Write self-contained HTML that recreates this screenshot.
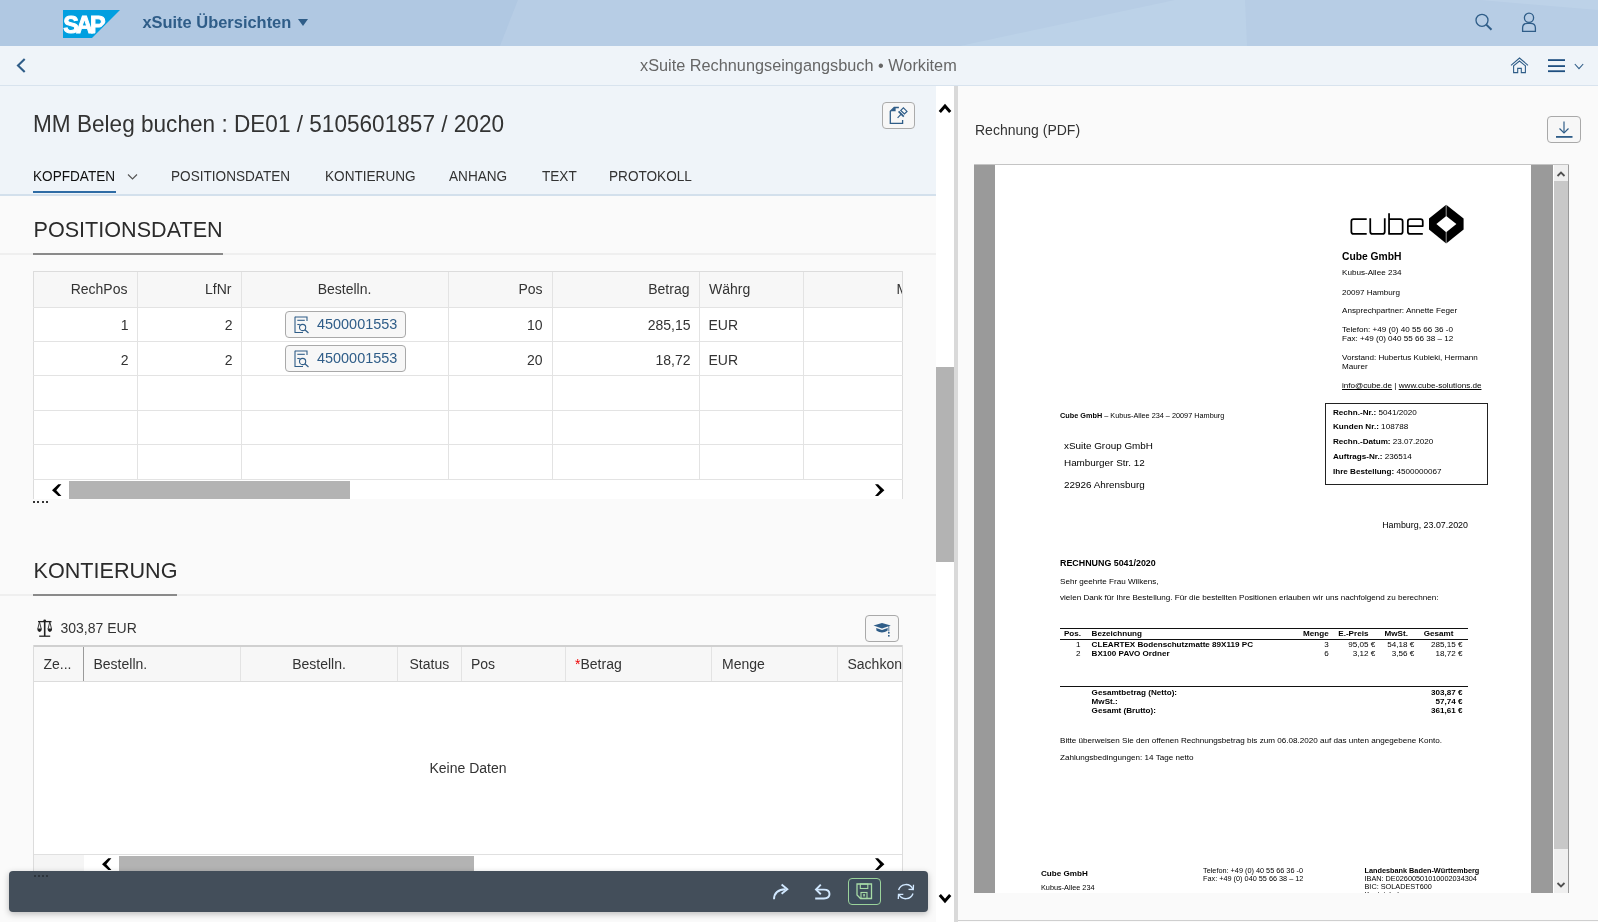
<!DOCTYPE html>
<html><head><meta charset="utf-8">
<style>
*{box-sizing:border-box;margin:0;padding:0}
html,body{width:1598px;height:922px;overflow:hidden;background:#fafafa;font-family:"Liberation Sans",sans-serif;color:#333}
body{will-change:transform}
.a{position:absolute}
.t{position:absolute;white-space:nowrap;line-height:1}
svg{overflow:visible}
</style></head><body>

<div class="a" style="left:0px;top:0px;width:1598px;height:46px;background:#b0c8e2"></div>
<svg class="a" style="left:0px;top:0px" width="1598" height="46" viewBox="0 0 1598 46"><polygon points="518,0 1598,0 1598,46 500,46" fill="#b7cde5"/><polygon points="960,46 1175,0 1245,0 1247,46" fill="#bcd2e8"/><polygon points="1480,0 1598,0 1598,10" fill="#bdd2e8"/></svg>
<svg class="a" style="left:63px;top:10px" width="57" height="28" viewBox="0 0 57 28"><polygon points="0,0 57,0 29,28 0,28" fill="#009fe0"/><clipPath id="sapc"><polygon points="0,0 57,0 29,28 0,28"/></clipPath><text clip-path="url(#sapc)" x="0.3" y="22.6" font-family="Liberation Sans" font-weight="bold" font-size="24.5" fill="#fff" stroke="#fff" stroke-width="1" letter-spacing="-3" transform="scale(0.955,1)">SAP</text></svg>
<div class="t" style="left:142.4px;top:13.68px;font-size:16.45px;font-weight:bold;color:#2f5d88;">xSuite Übersichten</div>
<svg class="a" style="left:297.5px;top:19px" width="10" height="7" viewBox="0 0 10 7"><polygon points="0,0 10,0 5,7" fill="#2f5d88"/></svg>
<svg class="a" style="left:1474px;top:12px" width="20" height="20" viewBox="0 0 20 20"><circle cx="8" cy="8.3" r="6" fill="none" stroke="#2f5d88" stroke-width="1.3"/><line x1="12.3" y1="12.6" x2="17.5" y2="17.8" stroke="#2f5d88" stroke-width="2"/></svg>
<svg class="a" style="left:1520px;top:12px" width="20" height="22" viewBox="0 0 20 22"><circle cx="9" cy="5.8" r="4.6" fill="none" stroke="#2f5d88" stroke-width="1.3"/><path d="M2.6,19.4 V16 Q2.6,11.4 7.5,11.4 H10.5 Q15.4,11.4 15.4,16 V19.4 Z" fill="none" stroke="#2f5d88" stroke-width="1.3"/></svg>
<div class="a" style="left:0px;top:46px;width:1598px;height:40px;background:#eff4f9;border-bottom:1px solid #d8e3ee"></div>
<div class="a" style="left:0px;top:86px;width:1598px;height:1px;background:#e4ecf4"></div>
<svg class="a" style="left:16px;top:58px" width="10" height="16" viewBox="0 0 10 16"><polyline points="8.7,1 2,7.5 8.7,14" fill="none" stroke="#2f5d88" stroke-width="2.1"/></svg>
<div class="t" style="left:640px;top:56.80px;font-size:16.3px;color:#666;">xSuite Rechnungseingangsbuch • Workitem</div>
<svg class="a" style="left:1510px;top:57px" width="20" height="17" viewBox="0 0 20 17"><polyline points="1,8.3 9.5,1 18,8.3" fill="none" stroke="#2f5d88" stroke-width="1.1"/><polyline points="3.2,9.2 9.5,4 15.8,9.2" fill="none" stroke="#2f5d88" stroke-width="1.1"/><path d="M3.6,9 V15.6 H7.7 V11.4 H11.3 V15.6 H15.4 V9" fill="none" stroke="#2f5d88" stroke-width="1.1"/></svg>
<svg class="a" style="left:1548px;top:58px" width="18" height="16" viewBox="0 0 18 16"><rect x="0" y="1.2" width="17" height="1.8" fill="#1f4f80"/><rect x="0" y="7.2" width="17" height="1.8" fill="#1f4f80"/><rect x="0" y="12.3" width="17" height="1.8" fill="#1f4f80"/></svg>
<svg class="a" style="left:1574px;top:63px" width="11" height="8" viewBox="0 0 11 8"><polyline points="0.8,1 5,5.6 9.2,1" fill="none" stroke="#2f5d88" stroke-width="1.1"/></svg>
<div class="a" style="left:0px;top:86px;width:936px;height:108px;background:#eff4f9"></div>
<div class="a" style="left:0px;top:194px;width:936px;height:2px;background:#d3e0ec"></div>
<div class="t" style="left:33px;top:114.17px;font-size:22.6px;color:#333;transform:scaleY(1.03);transform-origin:0 19.13px;">MM Beleg buchen : DE01 / 5105601857 / 2020</div>
<div class="a" style="left:882px;top:102px;width:33px;height:27px;background:#f7f7f7;border:1px solid #ababab;border-radius:4px"></div>
<svg class="a" style="left:888px;top:105px" width="22" height="22" viewBox="0 0 22 22"><path d="M10.9,2.5 H6.2 L2.3,6.2 V18.4 H14.6 V15" fill="none" stroke="#2f5d88" stroke-width="1.3"/><polygon points="2.3,6.3 7.6,2.1 7.6,6.3" fill="#2f5d88"/><line x1="9.6" y1="12.8" x2="13.2" y2="9.2" stroke="#2f5d88" stroke-width="1.2"/><line x1="10.6" y1="6.4" x2="15.8" y2="11.6" stroke="#2f5d88" stroke-width="1.7"/><polygon points="12.8,5.4 15.4,2.8 19,6.4 16.4,9" fill="none" stroke="#2f5d88" stroke-width="1.2"/></svg>
<div class="t" style="left:33px;top:169.79px;font-size:13.6px;color:#111;transform:scaleY(1.07);transform-origin:0 11.51px;">KOPFDATEN</div>
<div class="t" style="left:171px;top:169.79px;font-size:13.6px;color:#333;transform:scaleY(1.07);transform-origin:0 11.51px;">POSITIONSDATEN</div>
<div class="t" style="left:325px;top:169.79px;font-size:13.6px;color:#333;transform:scaleY(1.07);transform-origin:0 11.51px;">KONTIERUNG</div>
<div class="t" style="left:449px;top:169.79px;font-size:13.6px;color:#333;transform:scaleY(1.07);transform-origin:0 11.51px;">ANHANG</div>
<div class="t" style="left:542px;top:169.79px;font-size:13.6px;color:#333;transform:scaleY(1.07);transform-origin:0 11.51px;">TEXT</div>
<div class="t" style="left:609px;top:169.79px;font-size:13.6px;color:#333;transform:scaleY(1.07);transform-origin:0 11.51px;">PROTOKOLL</div>
<div class="a" style="left:33px;top:191px;width:83px;height:2px;background:#2f6ca5"></div>
<svg class="a" style="left:127px;top:173px" width="12" height="8" viewBox="0 0 12 8"><polyline points="1,1.5 5.5,6 10,1.5" fill="none" stroke="#555" stroke-width="1.15"/></svg>
<div class="a" style="left:0px;top:253px;width:936px;height:2px;background:#efefef"></div>
<div class="t" style="left:33.5px;top:218.52px;font-size:21.6px;color:#2b2b2b;transform:scaleY(1.03);transform-origin:0 18.28px;">POSITIONSDATEN</div>
<div class="a" style="left:33px;top:253px;width:190px;height:2px;background:#8a8a8a"></div>
<div class="a" style="left:33px;top:271px;width:870px;height:36px;background:#f7f7f7"></div>
<div class="a" style="left:33px;top:307px;width:870px;height:172px;background:#fff"></div>
<div class="a" style="left:33px;top:478px;width:870px;height:21px;background:#fff"></div>
<div class="a" style="left:137px;top:271px;width:1px;height:208px;background:#e3e3e3"></div>
<div class="a" style="left:241px;top:271px;width:1px;height:208px;background:#e3e3e3"></div>
<div class="a" style="left:448px;top:271px;width:1px;height:208px;background:#e3e3e3"></div>
<div class="a" style="left:552px;top:271px;width:1px;height:208px;background:#e3e3e3"></div>
<div class="a" style="left:699px;top:271px;width:1px;height:208px;background:#e3e3e3"></div>
<div class="a" style="left:803px;top:271px;width:1px;height:208px;background:#e3e3e3"></div>
<div class="a" style="left:33px;top:271px;width:1px;height:228px;background:#dcdcdc"></div>
<div class="a" style="left:33px;top:271px;width:870px;height:1px;background:#dcdcdc"></div>
<div class="a" style="left:902px;top:271px;width:1px;height:228px;background:#dcdcdc"></div>
<div class="a" style="left:33px;top:307px;width:870px;height:1px;background:#e3e3e3"></div>
<div class="a" style="left:33px;top:341px;width:870px;height:1px;background:#e3e3e3"></div>
<div class="a" style="left:33px;top:375px;width:870px;height:1px;background:#e3e3e3"></div>
<div class="a" style="left:33px;top:410px;width:870px;height:1px;background:#e3e3e3"></div>
<div class="a" style="left:33px;top:444px;width:870px;height:1px;background:#e3e3e3"></div>
<div class="a" style="left:33px;top:479px;width:870px;height:1px;background:#e3e3e3"></div>
<div class="t" style="left:-872.5px;width:1000px;text-align:right;top:282.35px;font-size:14px;color:#333;">RechPos</div>
<div class="t" style="left:-768.5px;width:1000px;text-align:right;top:282.35px;font-size:14px;color:#333;">LfNr</div>
<div class="t" style="left:-655.5px;width:2000px;text-align:center;top:282.35px;font-size:14px;color:#333;">Bestelln.</div>
<div class="t" style="left:-457.5px;width:1000px;text-align:right;top:282.35px;font-size:14px;color:#333;">Pos</div>
<div class="t" style="left:-310.5px;width:1000px;text-align:right;top:282.35px;font-size:14px;color:#333;">Betrag</div>
<div class="t" style="left:709px;top:282.35px;font-size:14px;color:#333;">Währg</div>
<div class="a" style="left:803px;top:271px;width:99px;height:36px;overflow:hidden"><div class="t" style="left:93.5px;top:11.35px;font-size:14px;color:#333">Menge</div></div>
<div class="t" style="left:-871.5px;width:1000px;text-align:right;top:317.85px;font-size:14px;color:#333;">1</div>
<div class="t" style="left:-767.5px;width:1000px;text-align:right;top:317.85px;font-size:14px;color:#333;">2</div>
<div class="t" style="left:-457.5px;width:1000px;text-align:right;top:317.85px;font-size:14px;color:#333;">10</div>
<div class="t" style="left:-309.5px;width:1000px;text-align:right;top:317.85px;font-size:14px;color:#333;">285,15</div>
<div class="t" style="left:708.5px;top:317.85px;font-size:14px;color:#333;">EUR</div>
<div class="a" style="left:285px;top:311px;width:121px;height:27px;background:#f7f7f7;border:1px solid #a9a9a9;border-radius:4px"></div>
<svg class="a" style="left:294px;top:316px" width="16" height="18" viewBox="0 0 16 18"><path d="M1,1 H13 V5 M13,1 V1" fill="none" stroke="#2f5d88" stroke-width="1.1"/><path d="M1,0.8 V16.5 H9" fill="none" stroke="#2f5d88" stroke-width="1.1"/><line x1="3.3" y1="4.3" x2="10.8" y2="4.3" stroke="#2f5d88" stroke-width="1.1"/><line x1="3.3" y1="8.5" x2="5.8" y2="8.5" stroke="#2f5d88" stroke-width="1.1"/><circle cx="8.6" cy="11.5" r="3.1" fill="none" stroke="#2f5d88" stroke-width="1.1"/><line x1="10.9" y1="13.8" x2="14.5" y2="17" stroke="#2f5d88" stroke-width="1.2"/></svg>
<div class="t" style="left:317px;top:316.77px;font-size:14.45px;color:#2f5d88;">4500001553</div>
<div class="t" style="left:-871.5px;width:1000px;text-align:right;top:352.55px;font-size:14px;color:#333;">2</div>
<div class="t" style="left:-767.5px;width:1000px;text-align:right;top:352.55px;font-size:14px;color:#333;">2</div>
<div class="t" style="left:-457.5px;width:1000px;text-align:right;top:352.55px;font-size:14px;color:#333;">20</div>
<div class="t" style="left:-309.5px;width:1000px;text-align:right;top:352.55px;font-size:14px;color:#333;">18,72</div>
<div class="t" style="left:708.5px;top:352.55px;font-size:14px;color:#333;">EUR</div>
<div class="a" style="left:285px;top:345px;width:121px;height:27px;background:#f7f7f7;border:1px solid #a9a9a9;border-radius:4px"></div>
<svg class="a" style="left:294px;top:350px" width="16" height="18" viewBox="0 0 16 18"><path d="M1,1 H13 V5 M13,1 V1" fill="none" stroke="#2f5d88" stroke-width="1.1"/><path d="M1,0.8 V16.5 H9" fill="none" stroke="#2f5d88" stroke-width="1.1"/><line x1="3.3" y1="4.3" x2="10.8" y2="4.3" stroke="#2f5d88" stroke-width="1.1"/><line x1="3.3" y1="8.5" x2="5.8" y2="8.5" stroke="#2f5d88" stroke-width="1.1"/><circle cx="8.6" cy="11.5" r="3.1" fill="none" stroke="#2f5d88" stroke-width="1.1"/><line x1="10.9" y1="13.8" x2="14.5" y2="17" stroke="#2f5d88" stroke-width="1.2"/></svg>
<div class="t" style="left:317px;top:351.47px;font-size:14.45px;color:#2f5d88;">4500001553</div>
<div class="a" style="left:69px;top:481px;width:281px;height:18px;background:#b3b3b3"></div>
<svg class="a" style="left:51.9px;top:484px" width="12" height="14" viewBox="0 0 12 14"><polygon points="6.3,0.2 9.4,0.2 4.3,6.2 9.4,12 6.3,12 0,6.2" fill="#000"/></svg>
<svg class="a" style="left:874.5px;top:484px" width="12" height="14" viewBox="0 0 12 14"><polygon points="3.1,0.2 0,0.2 5.1,6.2 0,12 3.1,12 9.4,6.2" fill="#000"/></svg>
<div class="a" style="left:33px;top:501px;width:2px;height:2px;background:#333"></div>
<div class="a" style="left:37px;top:501px;width:2px;height:2px;background:#333"></div>
<div class="a" style="left:42px;top:501px;width:2px;height:2px;background:#333"></div>
<div class="a" style="left:46px;top:501px;width:2px;height:2px;background:#333"></div>
<div class="a" style="left:0px;top:594px;width:936px;height:2px;background:#efefef"></div>
<div class="t" style="left:33.5px;top:559.62px;font-size:21.6px;color:#2b2b2b;transform:scaleY(1.03);transform-origin:0 18.28px;">KONTIERUNG</div>
<div class="a" style="left:33px;top:594px;width:144px;height:2px;background:#8a8a8a"></div>
<svg class="a" style="left:37px;top:619px" width="16" height="19" viewBox="0 0 16 19"><line x1="7.7" y1="1.5" x2="7.7" y2="17" stroke="#222" stroke-width="1.6"/><line x1="2.2" y1="17.2" x2="13.2" y2="17.2" stroke="#222" stroke-width="1.3"/><line x1="1" y1="2.6" x2="14.5" y2="2.6" stroke="#222" stroke-width="1.3"/><circle cx="7.7" cy="1.9" r="1.4" fill="#222"/><path d="M2.5,2.8 L0.8,9.8 M2.5,2.8 L4.2,9.8 M12.8,2.8 L11.1,9.8 M12.8,2.8 L14.5,9.8" stroke="#222" stroke-width="0.9" fill="none"/><path d="M0.3,9.6 H4.8 Q4.6,12.9 2.55,12.9 Q0.5,12.9 0.3,9.6 Z M10.6,9.6 H15.1 Q14.9,12.9 12.85,12.9 Q10.8,12.9 10.6,9.6 Z" fill="#222"/></svg>
<div class="t" style="left:60.5px;top:620.75px;font-size:14px;color:#333;">303,87 EUR</div>
<div class="a" style="left:865px;top:615px;width:34px;height:27px;background:#f7f7f7;border:1px solid #a9a9a9;border-radius:4px"></div>
<svg class="a" style="left:873px;top:623px" width="19" height="15" viewBox="0 0 19 15"><polygon points="0.5,2.6 9,0 17.8,2.6 9,5.4" fill="#2f5d88"/><path d="M3.2,5 L3.5,7.8 Q9,11 14.5,7.8 L14.8,5 L9,7 Z" fill="#2f5d88"/><line x1="15.8" y1="3" x2="15.8" y2="8.5" stroke="#2f5d88" stroke-width="0.8"/><rect x="15" y="9" width="1.6" height="1.6" fill="#2f5d88"/><rect x="15" y="12" width="1.6" height="1.6" fill="#2f5d88"/></svg>
<div class="a" style="left:33px;top:645px;width:870px;height:36px;background:#f7f7f7"></div>
<div class="a" style="left:33px;top:682px;width:870px;height:173px;background:#fff"></div>
<div class="a" style="left:33px;top:645px;width:870px;height:2px;background:#d0d0d0"></div>
<div class="a" style="left:33px;top:681px;width:870px;height:1px;background:#dcdcdc"></div>
<div class="a" style="left:33px;top:854px;width:870px;height:1px;background:#e0e0e0"></div>
<div class="a" style="left:33px;top:645px;width:1px;height:226px;background:#dcdcdc"></div>
<div class="a" style="left:902px;top:645px;width:1px;height:226px;background:#dcdcdc"></div>
<div class="a" style="left:83px;top:647px;width:1px;height:34px;background:#9a9a9a"></div>
<div class="a" style="left:240px;top:647px;width:1px;height:34px;background:#e3e3e3"></div>
<div class="a" style="left:397px;top:647px;width:1px;height:34px;background:#e3e3e3"></div>
<div class="a" style="left:461px;top:647px;width:1px;height:34px;background:#e3e3e3"></div>
<div class="a" style="left:565px;top:647px;width:1px;height:34px;background:#e3e3e3"></div>
<div class="a" style="left:711px;top:647px;width:1px;height:34px;background:#e3e3e3"></div>
<div class="a" style="left:837px;top:647px;width:1px;height:34px;background:#e3e3e3"></div>
<div class="t" style="left:43.5px;top:657.15px;font-size:14px;color:#333;">Ze...</div>
<div class="t" style="left:93.5px;top:657.15px;font-size:14px;color:#333;">Bestelln.</div>
<div class="t" style="left:-681px;width:2000px;text-align:center;top:657.15px;font-size:14px;color:#333;">Bestelln.</div>
<div class="t" style="left:409.5px;top:657.15px;font-size:14px;color:#333;">Status</div>
<div class="t" style="left:471px;top:657.15px;font-size:14px;color:#333;">Pos</div>
<div class="t" style="left:575px;top:657.15px;font-size:14px;color:#333;"><span style="color:#e00">*</span>Betrag</div>
<div class="t" style="left:722px;top:657.15px;font-size:14px;color:#333;">Menge</div>
<div class="a" style="left:837px;top:645px;width:65px;height:36px;overflow:hidden"><div class="t" style="left:10.5px;top:12.15px;font-size:14px;color:#333">Sachkonto</div></div>
<div class="t" style="left:-532px;width:2000px;text-align:center;top:760.95px;font-size:14px;color:#333;">Keine Daten</div>
<div class="a" style="left:34px;top:855px;width:50px;height:16px;background:#f5f5f5"></div>
<div class="a" style="left:84px;top:855px;width:818px;height:16px;background:#fff"></div>
<div class="a" style="left:119px;top:856px;width:355px;height:15px;background:#b3b3b3"></div>
<svg class="a" style="left:101.5px;top:858px" width="12" height="14" viewBox="0 0 12 14"><polygon points="6.3,0.2 9.4,0.2 4.3,6.2 9.4,12 6.3,12 0,6.2" fill="#000"/></svg>
<svg class="a" style="left:874.5px;top:858px" width="12" height="14" viewBox="0 0 12 14"><polygon points="3.1,0.2 0,0.2 5.1,6.2 0,12 3.1,12 9.4,6.2" fill="#000"/></svg>
<div class="a" style="left:8.5px;top:871px;width:919px;height:41px;background:#434e5a;border-radius:4px;box-shadow:0 2px 6px rgba(0,0,0,0.25)"></div>
<div class="a" style="left:33.5px;top:875px;width:2px;height:2px;background:#2c343c"></div>
<div class="a" style="left:37.8px;top:875px;width:2px;height:2px;background:#2c343c"></div>
<div class="a" style="left:42.1px;top:875px;width:2px;height:2px;background:#2c343c"></div>
<div class="a" style="left:46.4px;top:875px;width:2px;height:2px;background:#2c343c"></div>
<svg class="a" style="left:772px;top:883px" width="18" height="17" viewBox="0 0 18 17"><path d="M2,16.3 Q2.2,6.6 13.5,6.2" fill="none" stroke="#d1e8ff" stroke-width="1.9"/><polyline points="9.6,1.6 15.3,6.2 9.6,10.8" fill="none" stroke="#d1e8ff" stroke-width="1.9"/></svg>
<svg class="a" style="left:814px;top:883px" width="18" height="17" viewBox="0 0 18 17"><path d="M2.5,6.6 H10 Q15.5,6.6 15.5,11.1 Q15.5,15.5 10,15.5 H1.2" fill="none" stroke="#d1e8ff" stroke-width="1.9"/><polyline points="6.8,1.7 2,6.6 6.8,11.2" fill="none" stroke="#d1e8ff" stroke-width="1.9"/></svg>
<div class="a" style="left:848px;top:878px;width:33px;height:27px;background:#3d4d5c;border:1px solid #9bd39b;border-radius:4px"></div>
<svg class="a" style="left:856px;top:883px" width="17" height="17" viewBox="0 0 17 17"><path d="M1,1 H15.5 V15.5 H4.5 L1,12 Z" fill="none" stroke="#a6dba6" stroke-width="1.3"/><rect x="4.3" y="1" width="7.5" height="4.5" fill="none" stroke="#a6dba6" stroke-width="1.1"/><rect x="5" y="9.5" width="6" height="6" fill="none" stroke="#a6dba6" stroke-width="1.1"/><rect x="7.3" y="11" width="1.5" height="2.5" fill="#a6dba6"/></svg>
<svg class="a" style="left:896px;top:883px" width="20" height="18" viewBox="0 0 20 18"><path d="M2.6,7 A7.6,7.6 0 0 1 16.8,6" fill="none" stroke="#d1e8ff" stroke-width="1.4"/><path d="M17,10.5 A7.6,7.6 0 0 1 3,11.5" fill="none" stroke="#d1e8ff" stroke-width="1.4"/><polyline points="12.5,6.3 17.3,6.5 17.5,1.7" fill="none" stroke="#d1e8ff" stroke-width="1.3"/><polyline points="7.3,11.3 2.5,11.3 2.3,16" fill="none" stroke="#d1e8ff" stroke-width="1.3"/></svg>
<div class="a" style="left:936px;top:86px;width:18px;height:836px;background:#fff"></div>
<div class="a" style="left:936px;top:367px;width:18px;height:195px;background:#b3b3b3"></div>
<svg class="a" style="left:938px;top:102px" width="14" height="12" viewBox="0 0 14 12"><polyline points="1.8,10 7,4 12.2,10" fill="none" stroke="#000" stroke-width="3" stroke-linejoin="miter"/></svg>
<svg class="a" style="left:938px;top:893px" width="14" height="12" viewBox="0 0 14 12"><polyline points="1.8,2 7,8 12.2,2" fill="none" stroke="#000" stroke-width="3" stroke-linejoin="miter"/></svg>
<div class="a" style="left:954px;top:86px;width:4px;height:836px;background:#d9d9d9"></div>
<div class="a" style="left:958px;top:86px;width:640px;height:836px;background:#fafafa"></div>
<div class="a" style="left:958px;top:920px;width:640px;height:1px;background:#cfcfcf"></div>
<div class="t" style="left:975px;top:123.15px;font-size:14px;color:#333;">Rechnung (PDF)</div>
<div class="a" style="left:1547px;top:116px;width:34px;height:27px;background:#f7f7f7;border:1px solid #a9a9a9;border-radius:4px"></div>
<svg class="a" style="left:1555px;top:121px" width="18" height="17" viewBox="0 0 18 17"><line x1="9" y1="0.5" x2="9" y2="12" stroke="#2f5d88" stroke-width="1.2"/><polyline points="4.5,7.5 9,12 13.5,7.5" fill="none" stroke="#2f5d88" stroke-width="1.2"/><rect x="1" y="15" width="16.5" height="1.8" fill="#2f5d88"/></svg>
<div class="a" style="left:974px;top:164px;width:595px;height:729px;background:#9a9a9a"></div>
<div class="a" style="left:974px;top:164px;width:595px;height:1px;background:#c4c4c4"></div>
<div class="a" style="left:995px;top:165px;width:536px;height:728px;background:#fff"></div>
<div class="a" style="left:1553px;top:165px;width:1px;height:728px;background:#fff"></div>
<div class="a" style="left:1554px;top:165px;width:14px;height:728px;background:#efefef"></div>
<div class="a" style="left:1554px;top:181px;width:14px;height:668px;background:#c8c8c8"></div>
<svg class="a" style="left:1556px;top:170px" width="10" height="8" viewBox="0 0 10 8"><polyline points="1.5,6 5,2.5 8.5,6" fill="none" stroke="#505050" stroke-width="1.8"/></svg>
<svg class="a" style="left:1556px;top:881px" width="10" height="8" viewBox="0 0 10 8"><polyline points="1.5,2 5,5.5 8.5,2" fill="none" stroke="#505050" stroke-width="1.8"/></svg>
<div class="a" style="left:995px;top:165px;width:536px;height:728px;overflow:hidden">
<svg class="a" style="left:345px;top:33px" width="140" height="52" viewBox="0 0 140 52"><g fill="none" stroke="#000" stroke-width="1.75" stroke-linejoin="round"><path d="M26.7,21.15 H13.6 Q11.35,21.15 11.35,23.4 V33.7 Q11.35,35.95 13.6,35.95 H26.7"/><path d="M30.25,20.3 V33.7 Q30.25,35.95 32.5,35.95 H42.5 Q44.75,35.95 44.75,33.7 V20.3"/><path d="M49.05,15.3 V35.95 H60.4 Q62.65,35.95 62.65,33.7 V23.4 Q62.65,21.15 60.4,21.15 H49.05"/><path d="M82.8,35.95 H70.1 Q67.85,35.95 67.85,33.7 V23.4 Q67.85,21.15 70.1,21.15 H80.5 Q82.75,21.15 82.75,23.4 V28 H67.85"/></g><polygon points="106.2,6.8 123.6,20.5 123.6,31.6 106.2,45.6 89,31.6 89,20.5" fill="#000"/><polygon points="96.4,26.1 106.2,18 116.4,26.1 106.2,34.2" fill="#fff"/><line x1="106.2" y1="6" x2="106.2" y2="18.5" stroke="#fff" stroke-width="0.6"/><line x1="106.2" y1="34" x2="106.2" y2="46.5" stroke="#fff" stroke-width="0.6"/></svg>
<div class="t" style="left:347px;top:86.98px;font-size:10.3px;font-weight:bold;color:#000;">Cube GmbH</div>
<div class="t" style="left:347px;top:103.54px;font-size:8.1px;color:#000;">Kubus-Allee 234</div>
<div class="t" style="left:347px;top:123.54px;font-size:8.1px;color:#000;">20097 Hamburg</div>
<div class="t" style="left:347px;top:142.44px;font-size:8.1px;color:#000;">Ansprechpartner: Annette Feger</div>
<div class="t" style="left:347px;top:160.64px;font-size:8.1px;color:#000;">Telefon: +49 (0) 40 55 66 36 -0</div>
<div class="t" style="left:347px;top:170.24px;font-size:8.1px;color:#000;">Fax: +49 (0) 040 55 66 38 – 12</div>
<div class="t" style="left:347px;top:189.14px;font-size:8.1px;color:#000;">Vorstand: Hubertus Kubieki, Hermann</div>
<div class="t" style="left:347px;top:198.24px;font-size:8.1px;color:#000;">Maurer</div>
<div class="t" style="left:347px;top:216.84px;font-size:8.1px;color:#000;"><u>info@cube.de</u> | <u>www.cube-solutions.de</u></div>
<div class="t" style="left:65px;top:247.02px;font-size:7.3px;color:#000;"><b>Cube GmbH</b> – Kubus-Allee 234 – 20097 Hamburg</div>
<div class="t" style="left:69px;top:276.32px;font-size:9.9px;color:#000;">xSuite Group GmbH</div>
<div class="t" style="left:69px;top:293.12px;font-size:9.9px;color:#000;">Hamburger Str. 12</div>
<div class="t" style="left:69px;top:315.12px;font-size:9.9px;color:#000;">22926 Ahrensburg</div>
<div class="a" style="left:330.0px;top:238.0px;width:163px;height:82px;border:1px solid #222"></div>
<div class="t" style="left:338px;top:243.54px;font-size:8.1px;color:#000;"><b>Rechn.-Nr.:</b> 5041/2020</div>
<div class="t" style="left:338px;top:258.44px;font-size:8.1px;color:#000;"><b>Kunden Nr.:</b> 108788</div>
<div class="t" style="left:338px;top:273.24px;font-size:8.1px;color:#000;"><b>Rechn.-Datum:</b> 23.07.2020</div>
<div class="t" style="left:338px;top:287.64px;font-size:8.1px;color:#000;"><b>Auftrags-Nr.:</b> 236514</div>
<div class="t" style="left:338px;top:302.54px;font-size:8.1px;color:#000;"><b>Ihre Bestellung:</b> 4500000067</div>
<div class="t" style="left:-527px;width:1000px;text-align:right;top:356.17px;font-size:8.9px;color:#000;">Hamburg, 23.07.2020</div>
<div class="t" style="left:65px;top:394.17px;font-size:8.9px;font-weight:bold;color:#000;">RECHNUNG 5041/2020</div>
<div class="t" style="left:65px;top:412.64px;font-size:8.1px;color:#000;">Sehr geehrte Frau Wilkens,</div>
<div class="t" style="left:65px;top:429.44px;font-size:8.1px;color:#000;">vielen Dank für Ihre Bestellung. Für die bestellten Positionen erlauben wir uns nachfolgend zu berechnen:</div>
<div class="a" style="left:65px;top:462.5px;width:408px;height:1.4px;background:#111"></div>
<div class="a" style="left:65px;top:473.5px;width:408px;height:1.4px;background:#111"></div>
<div class="a" style="left:65px;top:520.8px;width:408px;height:1.2px;background:#111"></div>
<div class="t" style="left:-914px;width:1000px;text-align:right;top:465.34px;font-size:8.1px;font-weight:bold;color:#000;">Pos.</div>
<div class="t" style="left:96.6px;top:465.34px;font-size:8.1px;font-weight:bold;color:#000;">Bezeichnung</div>
<div class="t" style="left:-666.3px;width:1000px;text-align:right;top:465.34px;font-size:8.1px;font-weight:bold;color:#000;">Menge</div>
<div class="t" style="left:-626.6px;width:1000px;text-align:right;top:465.34px;font-size:8.1px;font-weight:bold;color:#000;">E.-Preis</div>
<div class="t" style="left:-587.1px;width:1000px;text-align:right;top:465.34px;font-size:8.1px;font-weight:bold;color:#000;">MwSt.</div>
<div class="t" style="left:-541.6px;width:1000px;text-align:right;top:465.34px;font-size:8.1px;font-weight:bold;color:#000;">Gesamt</div>
<div class="t" style="left:-914.4px;width:1000px;text-align:right;top:475.84px;font-size:8.1px;color:#000;">1</div>
<div class="t" style="left:96.6px;top:475.84px;font-size:8.1px;font-weight:bold;color:#000;">CLEARTEX Bodenschutzmatte 89X119 PC</div>
<div class="t" style="left:-666.3px;width:1000px;text-align:right;top:475.84px;font-size:8.1px;color:#000;">3</div>
<div class="t" style="left:-619.7px;width:1000px;text-align:right;top:475.84px;font-size:8.1px;color:#000;">95,05 €</div>
<div class="t" style="left:-580.8px;width:1000px;text-align:right;top:475.84px;font-size:8.1px;color:#000;">54,18 €</div>
<div class="t" style="left:-532.4px;width:1000px;text-align:right;top:475.84px;font-size:8.1px;color:#000;">285,15 €</div>
<div class="t" style="left:-914.4px;width:1000px;text-align:right;top:485.34px;font-size:8.1px;color:#000;">2</div>
<div class="t" style="left:96.6px;top:485.34px;font-size:8.1px;font-weight:bold;color:#000;">BX100 PAVO Ordner</div>
<div class="t" style="left:-666.3px;width:1000px;text-align:right;top:485.34px;font-size:8.1px;color:#000;">6</div>
<div class="t" style="left:-619.7px;width:1000px;text-align:right;top:485.34px;font-size:8.1px;color:#000;">3,12 €</div>
<div class="t" style="left:-580.8px;width:1000px;text-align:right;top:485.34px;font-size:8.1px;color:#000;">3,56 €</div>
<div class="t" style="left:-532.4px;width:1000px;text-align:right;top:485.34px;font-size:8.1px;color:#000;">18,72 €</div>
<div class="t" style="left:96.6px;top:523.84px;font-size:8.1px;font-weight:bold;color:#000;">Gesamtbetrag (Netto):</div>
<div class="t" style="left:-532.4px;width:1000px;text-align:right;top:523.84px;font-size:8.1px;font-weight:bold;color:#000;">303,87 €</div>
<div class="t" style="left:96.6px;top:532.94px;font-size:8.1px;font-weight:bold;color:#000;">MwSt.:</div>
<div class="t" style="left:-532.4px;width:1000px;text-align:right;top:532.94px;font-size:8.1px;font-weight:bold;color:#000;">57,74 €</div>
<div class="t" style="left:96.6px;top:541.84px;font-size:8.1px;font-weight:bold;color:#000;">Gesamt (Brutto):</div>
<div class="t" style="left:-532.4px;width:1000px;text-align:right;top:541.84px;font-size:8.1px;font-weight:bold;color:#000;">361,61 €</div>
<div class="t" style="left:65px;top:571.84px;font-size:8.1px;color:#000;">Bitte überweisen Sie den offenen Rechnungsbetrag bis zum 06.08.2020 auf das unten angegebene Konto.</div>
<div class="t" style="left:65px;top:589.14px;font-size:8.1px;color:#000;">Zahlungsbedingungen: 14 Tage netto</div>
<div class="t" style="left:46px;top:704.64px;font-size:8.1px;font-weight:bold;color:#000;">Cube GmbH</div>
<div class="t" style="left:46px;top:719.32px;font-size:7.3px;color:#000;">Kubus-Allee 234</div>
<div class="t" style="left:208px;top:702.12px;font-size:7.3px;color:#000;">Telefon: +49 (0) 40 55 66 36 -0</div>
<div class="t" style="left:208px;top:710.12px;font-size:7.3px;color:#000;">Fax: +49 (0) 040 55 66 38 – 12</div>
<div class="t" style="left:208px;top:727.02px;font-size:7.3px;color:#000;">Info@cube.de | www.cube.de</div>
<div class="t" style="left:369.5px;top:702.12px;font-size:7.3px;font-weight:bold;color:#000;">Landesbank Baden-Württemberg</div>
<div class="t" style="left:369.5px;top:710.12px;font-size:7.3px;color:#000;">IBAN: DE02600501010002034304</div>
<div class="t" style="left:369.5px;top:718.12px;font-size:7.3px;color:#000;">BIC: SOLADEST600</div>
<div class="t" style="left:369.5px;top:726.12px;font-size:7.3px;color:#000;">Kontoinhaber:</div>
</div>
</body></html>
